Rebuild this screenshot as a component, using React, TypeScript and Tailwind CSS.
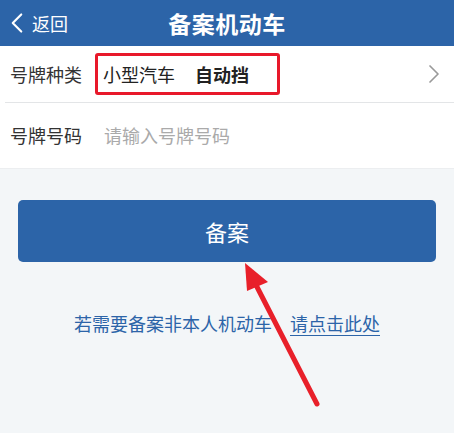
import { ChevronLeft, ChevronRight } from "lucide-react";

export default function App() {
  return (
    <div
      className="relative w-[454px] h-[433px] bg-[#f3f6f8] overflow-hidden"
      style={{ fontFamily: '"Noto Sans CJK SC", "Noto Sans", sans-serif' }}
    >
      {/* Header */}
      <div className="relative h-[46px] bg-[#2c64a8] flex items-center justify-center">
        <div className="absolute left-0 top-0 h-full flex items-center text-white text-[18px]">
          <ChevronLeft size={34} strokeWidth={1.5} />
          <span className="-ml-[2px]">返回</span>
        </div>
        <h1 className="text-white text-[23px] font-bold tracking-[0.5px]">备案机动车</h1>
      </div>

      {/* Form */}
      <div className="bg-white">
        <div className="h-[56px] flex items-center pl-[10px] pr-[4px]">
          <span className="text-[#333] text-[18px] w-[85px]">号牌种类</span>
          <div className="h-[42px] w-[185px] border-[3px] border-[#e8182a] rounded-[3px] flex items-center pl-[5px] text-[18px] text-[#222]">
            <span>小型汽车</span>
            <span className="ml-[20px] font-bold">自动挡</span>
          </div>
          <ChevronRight size={32} strokeWidth={1.3} className="ml-auto text-[#9a9a9a]" />
        </div>
        <div className="ml-[5px] h-px bg-[#e3e5e7]" />
        <div className="h-[66px] flex items-center pl-[10px] border-b border-[#eceef0]">
          <span className="text-[#333] text-[18px] w-[94px]">号牌号码</span>
          <span className="text-[#aaa] text-[18px]">请输入号牌号码</span>
        </div>
      </div>

      {/* Button */}
      <div className="px-[18px] pt-[31px]">
        <button className="w-full h-[62px] bg-[#2c64a8] rounded-[5px] text-white text-[22px]">
          备案
        </button>
      </div>

      {/* Link */}
      <p className="mt-[48px] text-center text-[18px] text-[#2c64a8]">
        若需要备案非本人机动车
        <span className="ml-[18px] underline underline-offset-[4px]">请点击此处</span>
      </p>

      {/* Annotation arrow */}
      <svg className="absolute left-0 top-0" width={454} height={433} viewBox="0 0 454 433">
        <line x1={317} y1={404} x2={255} y2={283} stroke="#e8202a" strokeWidth={5} strokeLinecap="round" />
        <polygon points="245,263 268,282 247,291" fill="#e8202a" />
      </svg>
    </div>
  );
}
